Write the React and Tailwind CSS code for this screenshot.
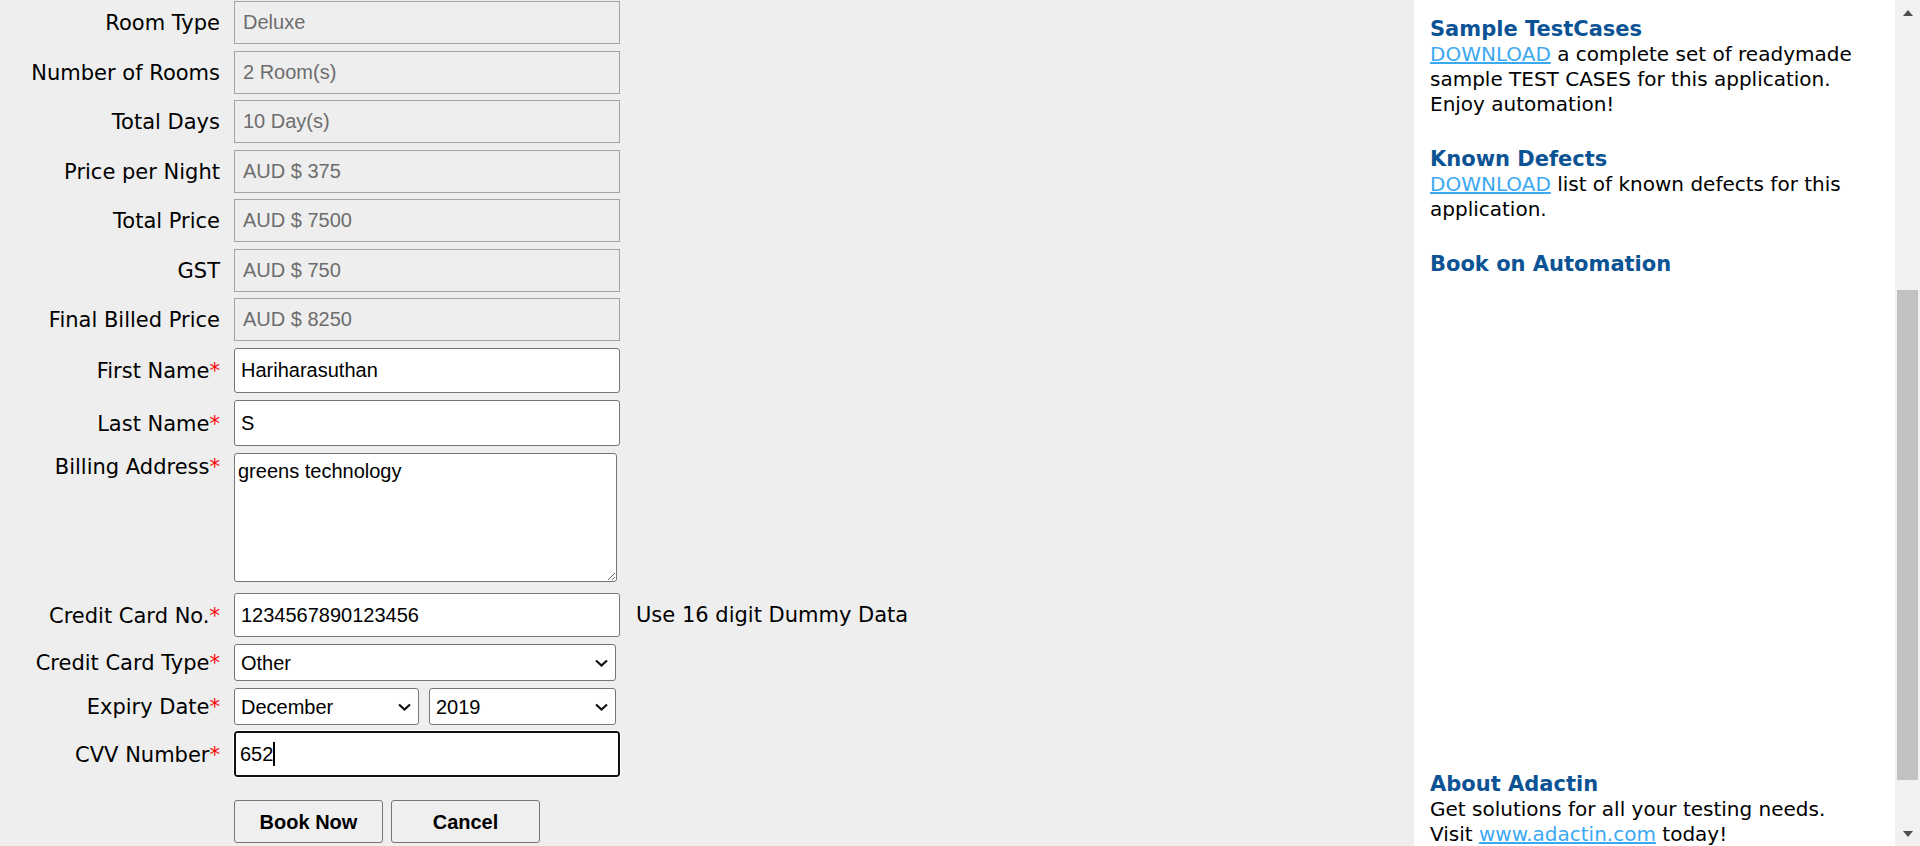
import React from "react";

const labelCls =
  "w-[220px] shrink-0 pt-[2px] text-right text-[21px] leading-[25px] text-black font-['DejaVu_Sans',Verdana,sans-serif]";
const fieldFont = "font-['Liberation_Sans',Arial,sans-serif] text-[20px]";
const headCls = "text-[21px] font-bold text-[#0b5394]";
const linkCls = "text-[#3ba8f2] underline";

const readonlyRows = [
  ["Room Type", "Deluxe"],
  ["Number of Rooms", "2 Room(s)"],
  ["Total Days", "10 Day(s)"],
  ["Price per Night", "AUD $ 375"],
  ["Total Price", "AUD $ 7500"],
  ["GST", "AUD $ 750"],
  ["Final Billed Price", "AUD $ 8250"],
];

function Label({ children, req }) {
  return (
    <div className={labelCls}>
      {children}
      {req && <span className="text-[#ff0000]">*</span>}
    </div>
  );
}

function Chevron() {
  return (
    <svg
      className="pointer-events-none absolute right-[8px] top-1/2 -translate-y-1/2"
      width="13"
      height="8"
      viewBox="0 0 13 8"
    >
      <path d="M1 1.5 L6.5 6.5 L12 1.5" fill="none" stroke="#111" strokeWidth="2.2" />
    </svg>
  );
}

function Select({ value, width }) {
  return (
    <div className={`relative h-[37px] ${width}`}>
      <select
        defaultValue={value}
        className={`h-full w-full appearance-none rounded-[3px] border border-[#767676] bg-white pl-[6px] text-black ${fieldFont}`}
      >
        <option>{value}</option>
      </select>
      <Chevron />
    </div>
  );
}

function Sidebar() {
  return (
    <div className="w-[481px] shrink-0 bg-white pl-[16px] pr-[31px] pt-[17px] text-[20px] leading-[25px] text-black font-['DejaVu_Sans',Verdana,sans-serif]">
      <div>
        <div className={headCls}>Sample TestCases</div>
        <div>
          <a href="#" className={linkCls}>
            DOWNLOAD
          </a>{" "}
          a complete set of readymade sample TEST CASES for this application. Enjoy automation!
        </div>
      </div>
      <div className="mt-[30px]">
        <div className={headCls}>Known Defects</div>
        <div>
          <a href="#" className={linkCls}>
            DOWNLOAD
          </a>{" "}
          list of known defects for this application.
        </div>
      </div>
      <div className={`mt-[30px] ${headCls}`}>Book on Automation</div>
      <div className="mt-[495px]">
        <div className={headCls}>About Adactin</div>
        <div>
          Get solutions for all your testing needs. Visit{" "}
          <a href="#" className={linkCls}>
            www.adactin.com
          </a>{" "}
          today!
        </div>
      </div>
    </div>
  );
}

function Scrollbar() {
  return (
    <div className="flex w-[25px] shrink-0 flex-col items-center bg-[#f1f1f1]">
      <div className="flex h-[25px] w-full items-center justify-center">
        <svg width="10" height="6" viewBox="0 0 10 6">
          <path d="M0 6 L5 0 L10 6 Z" fill="#505050" />
        </svg>
      </div>
      <div className="mt-[265px] h-[490px] w-[21px] bg-[#c1c1c1]" />
      <div className="flex-1" />
      <div className="flex h-[25px] w-full items-center justify-center">
        <svg width="10" height="6" viewBox="0 0 10 6">
          <path d="M0 0 L5 6 L10 0 Z" fill="#505050" />
        </svg>
      </div>
    </div>
  );
}

export default function App() {
  return (
    <div className="flex h-[846px] w-full overflow-hidden bg-[#eeeeee]">
      <div className="flex flex-1">
        <div className="flex-1 pt-[1px]">
          {readonlyRows.map(([label, value], i) => (
            <div key={label} className={`flex items-center ${i > 0 ? "mt-[6.5px]" : ""}`}>
              <Label>{label}</Label>
              <input
                readOnly
                value={value}
                className={`ml-[14px] h-[43px] w-[386px] border border-[#a3a3a3] bg-[#eeeeee] px-[8px] text-[#6d6d6d] outline-none ${fieldFont}`}
              />
            </div>
          ))}

          <div className="mt-[7px] flex items-center">
            <Label req>First Name</Label>
            <input
              defaultValue="Hariharasuthan"
              className={`ml-[14px] h-[45px] w-[386px] rounded-[3px] border border-[#767676] bg-white px-[6px] text-black outline-none ${fieldFont}`}
            />
          </div>
          <div className="mt-[7px] flex items-center">
            <Label req>Last Name</Label>
            <input
              defaultValue="S"
              className={`ml-[14px] h-[46px] w-[386px] rounded-[3px] border border-[#767676] bg-white px-[6px] text-black outline-none ${fieldFont}`}
            />
          </div>
          <div className="mt-[7px] flex items-start">
            <Label req>Billing Address</Label>
            <textarea
              defaultValue="greens technology"
              className={`ml-[14px] h-[129px] w-[383px] rounded-[3px] border border-[#767676] bg-white px-[3px] pt-[6px] leading-[23px] text-black outline-none ${fieldFont}`}
            />
          </div>
          <div className="mt-[11px] flex items-center">
            <Label req>Credit Card No.</Label>
            <input
              defaultValue="1234567890123456"
              className={`ml-[14px] h-[44px] w-[386px] rounded-[3px] border border-[#767676] bg-white px-[6px] text-black outline-none ${fieldFont}`}
            />
            <span className="ml-[16px] pt-[2px] text-[21px] text-black font-['DejaVu_Sans',Verdana,sans-serif]">
              Use 16 digit Dummy Data
            </span>
          </div>
          <div className="mt-[7px] flex items-center">
            <Label req>Credit Card Type</Label>
            <div className="ml-[14px]">
              <Select value="Other" width="w-[382px]" />
            </div>
          </div>
          <div className="mt-[7px] flex items-center">
            <Label req>Expiry Date</Label>
            <div className="ml-[14px] flex gap-[10px]">
              <Select value="December" width="w-[185px]" />
              <Select value="2019" width="w-[187px]" />
            </div>
          </div>
          <div className="mt-[6px] flex items-center">
            <Label req>CVV Number</Label>
            <div className="relative ml-[14px]">
              <input
                defaultValue="652"
                className={`h-[46px] w-[386px] rounded-[3px] border-2 border-[#101010] bg-white px-[4px] text-black outline outline-white ${fieldFont}`}
              />
              <span className="absolute left-[39px] top-[11px] h-[24px] w-[2px] bg-black" />
            </div>
          </div>
          <div className="mt-[23px] flex">
            <div className="w-[220px] shrink-0" />
            <div className="ml-[14px] flex gap-[8px]">
              <button className="h-[43px] w-[149px] rounded-[3px] border border-[#767676] bg-[#efefef] font-bold text-black font-['Liberation_Sans',Arial,sans-serif] text-[20px]">
                Book Now
              </button>
              <button className="h-[43px] w-[149px] rounded-[3px] border border-[#767676] bg-[#efefef] font-bold text-black font-['Liberation_Sans',Arial,sans-serif] text-[20px]">
                Cancel
              </button>
            </div>
          </div>
        </div>
        <Sidebar />
      </div>
      <Scrollbar />
    </div>
  );
}
